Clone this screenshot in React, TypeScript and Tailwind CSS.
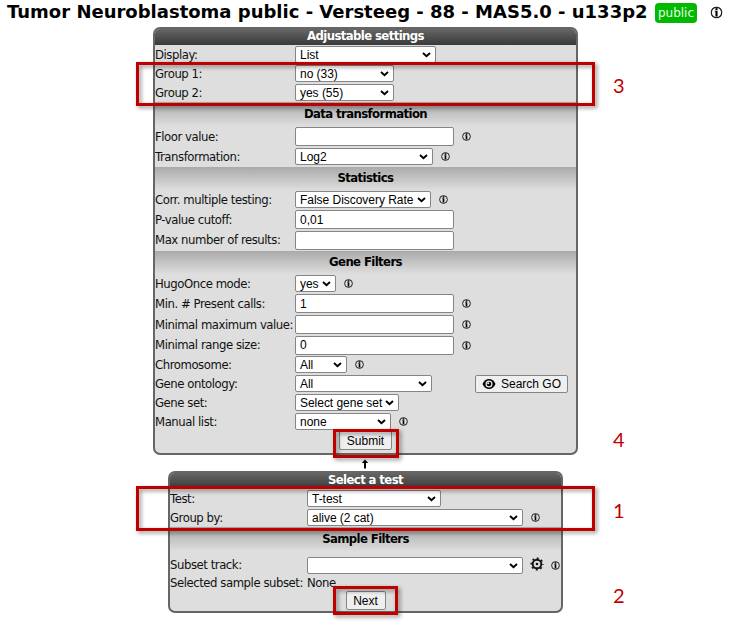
import type { ReactNode } from "react";

function Info({ className = "ml-[8px]" }: { className?: string }) {
  return (
    <svg viewBox="0 0 9 9" className={`h-[9px] w-[9px] shrink-0 ${className}`}>
      <circle cx="4.5" cy="4.5" r="3.9" fill="none" stroke="#222" strokeWidth="1" />
      <rect x="3.7" y="1.3" width="1.6" height="1.5" fill="#000" />
      <rect x="3.7" y="3.3" width="1.6" height="4.2" fill="#000" />
      <path d="M3.1 3.6h1.2" fill="none" stroke="#222" strokeWidth="0.6" />
    </svg>
  );
}

function Select({ w, children }: { w: string; children?: ReactNode }) {
  return (
    <div className={`flex h-[17px] shrink-0 items-center justify-between rounded-[2px] border border-[#858585] bg-white pl-1 pr-[4px] ${w}`}>
      <span className="whitespace-nowrap pt-px font-['Liberation_Sans',sans-serif] text-[12px] leading-[15px] tracking-[-0.03px]">{children}</span>
      <svg viewBox="0 0 9 6" className="h-[6px] w-[9px] shrink-0">
        <path d="M1 1l3.5 3.3L8 1" fill="none" stroke="#000" strokeWidth="1.9" />
      </svg>
    </div>
  );
}

function Field({ children }: { children?: ReactNode }) {
  return (
    <div className="flex h-[19px] w-[159px] shrink-0 items-center rounded-[2px] border border-[#858585] bg-white pl-[4px] font-['Liberation_Sans',sans-serif] text-[12px]">
      {children}
    </div>
  );
}

function Row({ label, h = "h-[19px]", lw = "w-[140px]", children }: { label: string; h?: string; lw?: string; children?: ReactNode }) {
  return (
    <div className={`flex items-center ${h}`}>
      <span className={`shrink-0 whitespace-nowrap text-[11.7px] leading-[16px] tracking-[-0.45px] text-[#111] ${lw}`}>{label}</span>
      {children}
    </div>
  );
}

function Band({ children, h = "h-[23px]" }: { children: ReactNode; h?: string }) {
  return (
    <div className={`flex items-center justify-center bg-gradient-to-b from-[#aaaaaa] to-[#dedede] text-[11.7px] font-bold tracking-[-0.6px] ${h}`}>
      {children}
    </div>
  );
}

function Head({ children }: { children: ReactNode }) {
  return (
    <div className="-mx-px flex h-[16px] items-center justify-center bg-gradient-to-b from-[#666] to-[#3a3a3a] text-[11.7px] font-bold tracking-[-0.6px] text-white">
      {children}
    </div>
  );
}

function Button({ children, className }: { children: ReactNode; className: string }) {
  return (
    <div className={`flex shrink-0 items-center justify-center whitespace-nowrap rounded-[2px] border border-[#858585] bg-[#efefef] font-['Liberation_Sans',sans-serif] text-[12px] ${className}`}>
      {children}
    </div>
  );
}

function Callout({ n, box, num }: { n: number; box: string; num: string }) {
  return (
    <>
      <div className={`absolute border-[3px] border-[#c00000] drop-shadow-[2px_2px_2px_rgba(0,0,0,0.45)] ${box}`} />
      <div className={`absolute left-[613px] font-['Lato',sans-serif] text-[20px] leading-[24px] text-[#c00000] ${num}`}>{n}</div>
    </>
  );
}

export default function App() {
  return (
    <div className="relative h-[628px] w-[730px] overflow-hidden bg-white font-['DejaVu_Sans',sans-serif] text-black">
      <div className="flex h-[27px] items-start pl-[7px]">
        <h1 className="w-[648px] shrink-0 whitespace-nowrap text-[18px] font-bold leading-[24px]">
          Tumor Neuroblastoma public - Versteeg - 88 - MAS5.0 - u133p2
        </h1>
        <span className="mt-[3px] flex h-[20px] w-[42px] shrink-0 items-center justify-center rounded-[4px] bg-[#00b900] text-[12px] text-[#e4ffe4]">public</span>
        <Info className="ml-[15px] mt-[8px] scale-[1.35]" />
      </div>

      <section className="ml-[153px] h-[428px] w-[425px] overflow-hidden rounded-[7px] border-2 border-[#666] bg-[#dedede]">
        <Head>Adjustable settings</Head>
        <Row label="Display:"><Select w="w-[141px]">List</Select></Row>
        <Row label="Group 1:"><Select w="w-[99px]">no (33)</Select></Row>
        <Row label="Group 2:"><Select w="w-[99px]">yes (55)</Select></Row>
        <Band h="h-[24px] pt-[2px]">Data transformation</Band>
        <Row label="Floor value:" h="h-[21px]"><Field /><Info /></Row>
        <Row label="Transformation:" h="h-[19px] mb-px"><Select w="w-[138px]">Log2</Select><Info /></Row>
        <Band>Statistics</Band>
        <Row label="Corr. multiple testing:"><Select w="w-[136px]">False Discovery Rate</Select><Info /></Row>
        <Row label="P-value cutoff:" h="h-[21px]"><Field>0,01</Field></Row>
        <Row label="Max number of results:" h="h-[20px] mb-px"><Field /></Row>
        <Band>Gene Filters</Band>
        <Row label="HugoOnce mode:"><Select w="w-[41px]">yes</Select><Info /></Row>
        <Row label="Min. # Present calls:" h="h-[21px]"><Field>1</Field><Info /></Row>
        <Row label="Minimal maximum value:" h="h-[21px]"><Field /><Info /></Row>
        <Row label="Minimal range size:" h="h-[20px]"><Field>0</Field><Info /></Row>
        <Row label="Chromosome:"><Select w="w-[52px]">All</Select><Info /></Row>
        <Row label="Gene ontology:">
          <Select w="w-[137px]">All</Select>
          <Button className="ml-[43px] h-[18px] w-[93px] gap-[5px]">
            <svg viewBox="0 0 14 12" className="h-[12px] w-[14px]">
              <path d="M.5 6C2 2.8 4.3 1 7 1s5 1.8 6.5 5C12 9.2 9.7 11 7 11S2 9.2.5 6z" />
              <circle cx="7" cy="6" r="3.5" fill="#efefef" />
              <circle cx="7" cy="6" r="2.3" />
              <circle cx="6.2" cy="5.2" r="1" fill="#efefef" />
            </svg>
            Search GO
          </Button>
        </Row>
        <Row label="Gene set:"><Select w="w-[104px]">Select gene set</Select></Row>
        <Row label="Manual list:"><Select w="w-[96px]">none</Select><Info /></Row>
        <div className="flex justify-center"><Button className="h-[19px] w-[53px]">Submit</Button></div>
      </section>

      <div className="flex h-[16px] items-center pl-[361px] pt-[2px]">
        <svg viewBox="0 0 8 10" className="h-[10px] w-[8px]">
          <path d="M4 .5L7.2 4H5v5.5H3V4H.8z" />
        </svg>
      </div>

      <section className="ml-[168px] h-[142px] w-[395px] overflow-hidden rounded-[7px] border-2 border-[#666] bg-[#dedede]">
        <Head>Select a test</Head>
        <Row label="Test:" lw="w-[137px]"><Select w="w-[134px]">T-test</Select></Row>
        <Row label="Group by:" lw="w-[137px]"><Select w="w-[216px]">alive (2 cat)</Select><Info className="ml-[8px]" /></Row>
        <Band h="h-[24px] pt-px">Sample Filters</Band>
        <Row label="Subset track:" lw="w-[137px] -mt-[2px]" h="h-[21px] mt-[4px]">
          <Select w="w-[216px]" />
          <svg viewBox="0 0 14 14" className="-mt-[3px] ml-[7px] h-[14px] w-[14px] shrink-0">
            <circle cx="7" cy="7" r="4.3" fill="none" stroke="#111" strokeWidth="1.9" />
            <circle cx="7" cy="7" r="5.8" fill="none" stroke="#111" strokeWidth="1.5" strokeDasharray="2 2.555" strokeDashoffset="1" />
            <circle cx="7" cy="7" r="1.3" fill="#111" />
          </svg>
          <Info className="ml-[7px]" />
        </Row>
        <Row label="Selected sample subset:" lw="w-[137px]" h="h-[14px]"><span className="text-[11.7px] leading-[16px] tracking-[-0.45px] text-[#111]">None</span></Row>
        <div className="flex justify-center pt-px"><Button className="h-[19px] w-[40px]">Next</Button></div>
      </section>

      <Callout n={3} box="left-[136px] top-[62px] h-[44px] w-[459px]" num="top-[73px]" />
      <Callout n={4} box="left-[333px] top-[429px] h-[29px] w-[66px]" num="top-[427px]" />
      <Callout n={1} box="left-[136px] top-[486px] h-[45px] w-[459px]" num="top-[498px]" />
      <Callout n={2} box="left-[333px] top-[586px] h-[29px] w-[65px]" num="top-[583px]" />
    </div>
  );
}
